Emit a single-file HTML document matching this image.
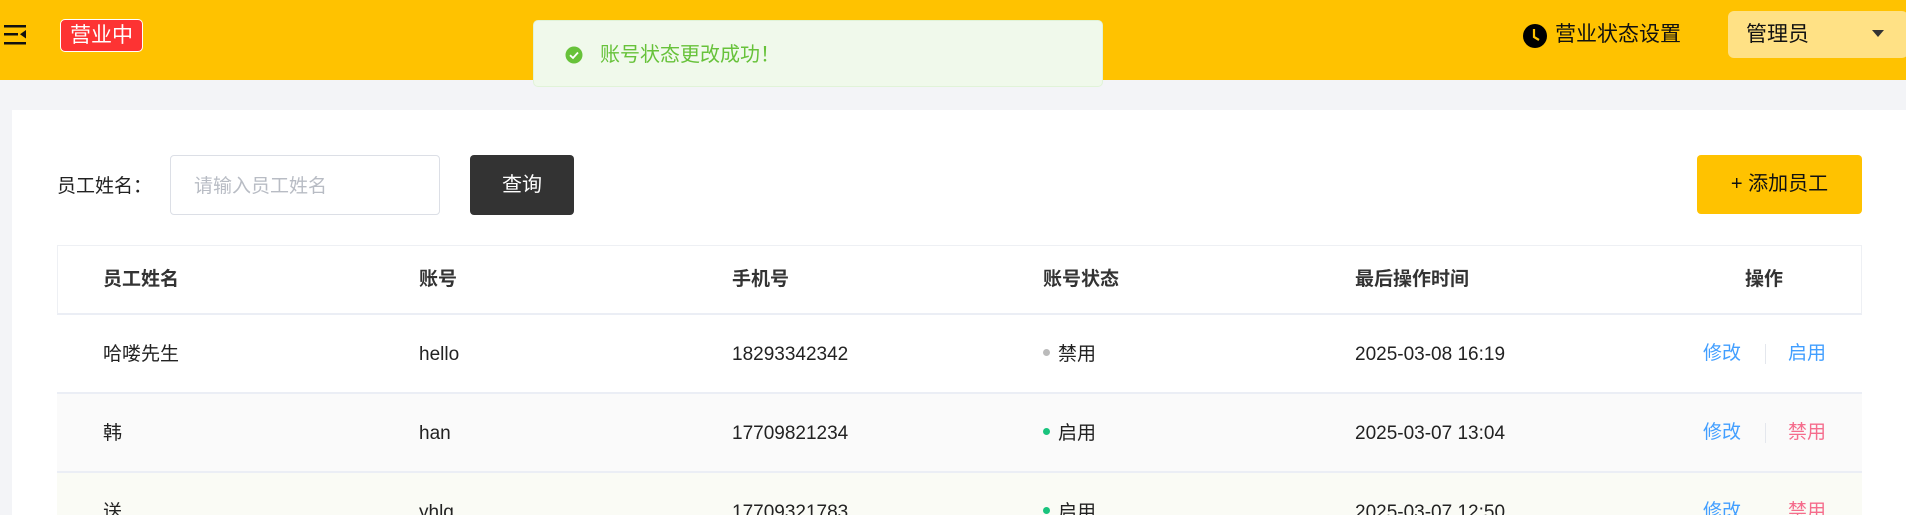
<!DOCTYPE html>
<html><head><meta charset="utf-8"><style>
*{margin:0;padding:0;box-sizing:border-box}
html,body{width:1906px;height:515px;overflow:hidden}
body{background:#f3f4f7;font-family:"Liberation Sans","Noto Sans CJK SC",sans-serif;position:relative;color:#333}
.hdr{position:absolute;left:0;top:0;width:1906px;height:80px;background:#ffc200}
.abs{position:absolute}
.badge{left:60px;top:19px;width:83px;height:33px;background:#fd3333;border:1px solid #fff;border-radius:5px;color:#fff;font-size:21px;line-height:31px;text-align:center}
.toast{left:533px;top:20px;width:570px;height:67px;background:#f0f9eb;border:1px solid #e1f3d8;border-radius:5px}
.card{left:12px;top:110px;width:1894px;height:420px;background:#fff}
.t{font-size:19px;line-height:24px;white-space:nowrap}
.btn{border-radius:4px;text-align:center;font-size:20px}
.row{position:absolute;left:57px;width:1805px}
.dot{display:inline-block;width:7px;height:7px;border-radius:50%;margin-right:8px;vertical-align:middle;position:relative;top:-2px}
</style></head><body>
<div class="hdr"></div>
<svg class="abs" style="left:3px;top:23px" width="26" height="24" viewBox="0 0 26 24"><rect x="1" y="2" width="22" height="2.5" fill="#111"/><rect x="1" y="10" width="14" height="2.5" fill="#111"/><rect x="1" y="19" width="22" height="2.5" fill="#111"/><path d="M23 7 L17 11.2 L23 15.5Z" fill="#111"/></svg>
<div class="abs badge">营业中</div>
<div class="abs toast"></div>
<svg class="abs" style="left:565px;top:46px" width="18" height="18" viewBox="0 0 18 18"><circle cx="9" cy="9" r="8.5" fill="#67c23a"/><path d="M5 9.2 L8 12 L13 6.5" stroke="#fff" stroke-width="1.8" fill="none"/></svg>
<div class="abs t" style="left:600px;top:43px;color:#67c23a;font-size:20px">账号状态更改成功！</div>
<svg class="abs" style="left:1522px;top:23px" width="26" height="26" viewBox="0 0 26 26"><circle cx="13" cy="13" r="12" fill="#000"/><path d="M12 6 V14 L17 17" stroke="#ffc200" stroke-width="2.2" fill="none"/></svg>
<div class="abs t" style="left:1555px;top:23px;color:#111;font-size:21px">营业状态设置</div>
<div class="abs" style="left:1728px;top:11px;width:180px;height:47px;background:#ffe185;border-radius:6px"></div>
<div class="abs t" style="left:1746px;top:23px;color:#111;font-size:21px">管理员</div>
<svg class="abs" style="left:1872px;top:30px" width="12" height="8"><path d="M0 0H12L6 7Z" fill="#333"/></svg>
<div class="abs card"></div>
<div class="abs t" style="left:57px;top:175px;color:#222">员工姓名：</div>
<div class="abs" style="left:170px;top:155px;width:270px;height:60px;border:1px solid #dcdfe6;border-radius:4px;background:#fff"></div>
<div class="abs t" style="left:194px;top:175px;color:#b8bcc4">请输入员工姓名</div>
<div class="abs btn" style="left:470px;top:155px;width:104px;height:60px;background:#333;color:#fff;line-height:60px">查询</div>
<div class="abs btn" style="left:1697px;top:155px;width:165px;height:59px;background:#ffc200;color:#111;line-height:59px">+ 添加员工</div>
<div class="row" style="top:245px;height:70px;border:1px solid #eef0f4;border-bottom:2px solid #ebeef5;background:#fff"></div>
<div class="row" style="top:315px;height:79px;background:#fff;border-bottom:2px solid #ebeef5"></div>
<div class="row" style="top:394px;height:79px;background:#fafafa;border-bottom:2px solid #ebeef5"></div>
<div class="row" style="top:473px;height:42px;background:#fafbf5"></div>
<div class="abs t" style="top:268px;left:103px;font-weight:bold;color:#333">员工姓名</div>
<div class="abs t" style="top:268px;left:419px;font-weight:bold;color:#333">账号</div>
<div class="abs t" style="top:268px;left:732px;font-weight:bold;color:#333">手机号</div>
<div class="abs t" style="top:268px;left:1043px;font-weight:bold;color:#333">账号状态</div>
<div class="abs t" style="top:268px;left:1355px;font-weight:bold;color:#333">最后操作时间</div>
<div class="abs t" style="top:268px;left:1745px;font-weight:bold;color:#333">操作</div>

<div class="abs t" style="top:343px;left:103px;color:#222">哈喽先生</div>
<div class="abs t" style="top:343px;left:419px;color:#222">hello</div>
<div class="abs t" style="top:343px;left:732px;color:#222">18293342342</div>
<div class="abs t" style="top:343px;left:1043px;color:#222"><span class="dot" style="background:#bbb"></span>禁用</div>
<div class="abs t" style="top:343px;left:1355px;color:#222">2025-03-08 16:19</div>
<div class="abs t" style="top:342px;left:1703px;color:#419eff">修改</div>
<div class="abs" style="top:344px;left:1765px;width:1px;height:20px;background:#e4e7ed"></div>
<div class="abs t" style="top:342px;left:1788px;color:#419eff">启用</div>

<div class="abs t" style="top:422px;left:103px;color:#222">韩</div>
<div class="abs t" style="top:422px;left:419px;color:#222">han</div>
<div class="abs t" style="top:422px;left:732px;color:#222">17709821234</div>
<div class="abs t" style="top:422px;left:1043px;color:#222"><span class="dot" style="background:#19c37d"></span>启用</div>
<div class="abs t" style="top:422px;left:1355px;color:#222">2025-03-07 13:04</div>
<div class="abs t" style="top:421px;left:1703px;color:#419eff">修改</div>
<div class="abs" style="top:423px;left:1765px;width:1px;height:20px;background:#e4e7ed"></div>
<div class="abs t" style="top:421px;left:1788px;color:#f56c8c">禁用</div>

<div class="abs t" style="top:501px;left:103px;color:#222">送</div>
<div class="abs t" style="top:501px;left:419px;color:#222">yhlq</div>
<div class="abs t" style="top:501px;left:732px;color:#222">17709321783</div>
<div class="abs t" style="top:501px;left:1043px;color:#222"><span class="dot" style="background:#19c37d"></span>启用</div>
<div class="abs t" style="top:501px;left:1355px;color:#222">2025-03-07 12:50</div>
<div class="abs t" style="top:500px;left:1703px;color:#419eff">修改</div>
<div class="abs t" style="top:500px;left:1788px;color:#f56c8c">禁用</div>
</body></html>
